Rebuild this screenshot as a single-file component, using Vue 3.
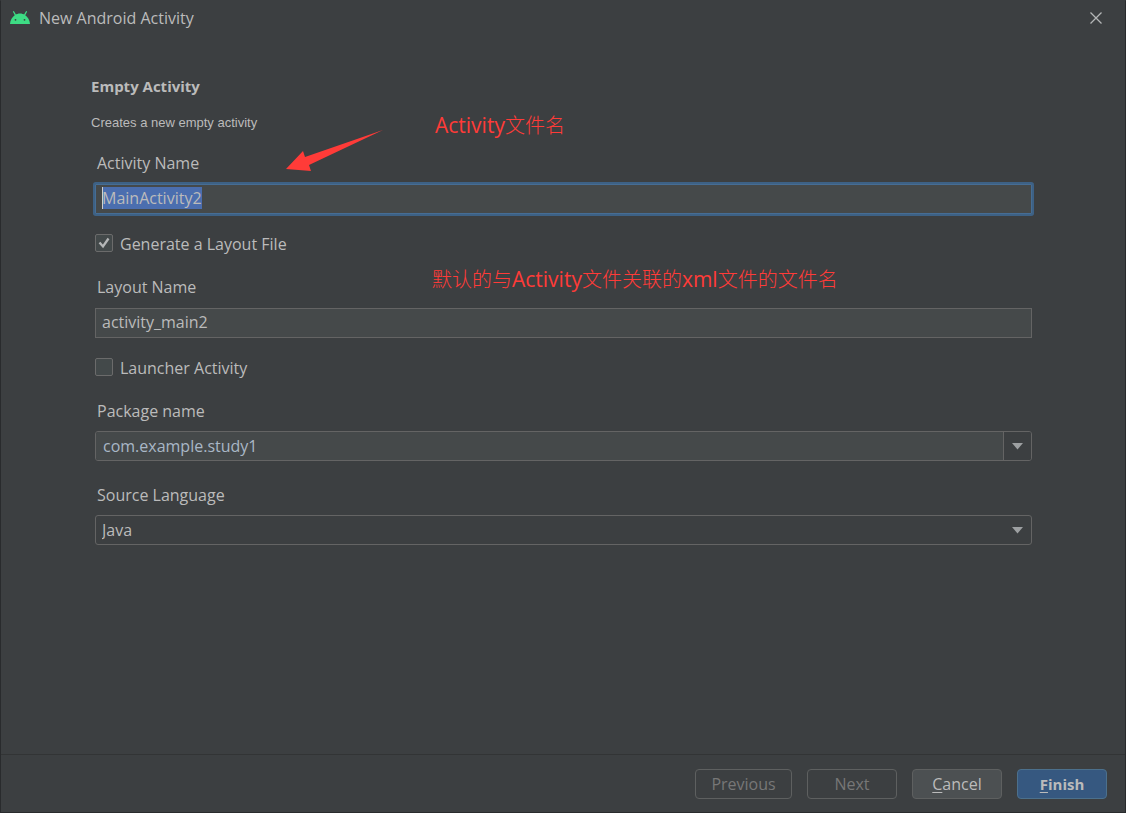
<script setup>
import { onMounted, ref } from 'vue'

const activityName = ref('MainActivity2')
const generateLayout = ref(true)
const layoutName = ref('activity_main2')
const launcher = ref(false)
const packageName = ref('com.example.study1')
const language = ref('Java')
const nameInput = ref(null)

onMounted(() => {
  nameInput.value.focus()
  nameInput.value.select()
})
</script>

<template>
  <div class="dialog">
    <header class="titlebar">
      <svg class="logo" width="20" height="14" viewBox="0 0 20 14" aria-hidden="true">
        <path d="M5.2 3.6 3.6.8M14.8 3.6 16.4.8" stroke="#3ddc84" stroke-width="1.3" stroke-linecap="round" />
        <path d="M0 13C.2 9.200 2.200 5.800 5 4 8 2 12 2 15 4 17.800 5.800 19.800 9.200 20 13Z" fill="#3ddc84" />
        <circle cx="5.500" cy="8.800" r="0.900" fill="#3c3f41" />
        <circle cx="14.500" cy="8.800" r="0.900" fill="#3c3f41" />
      </svg>
      <span class="caption">New Android Activity</span>
      <button class="close" type="button" aria-label="Close">
        <svg width="12" height="12" viewBox="0 0 12 12"><path d="M.5.5l11 11M11.500.5l-11 11" stroke="#b4b6b7" stroke-width="1.300" /></svg>
      </button>
    </header>

    <main class="content">
      <h1>Empty Activity</h1>
      <p class="description">Creates a new empty activity</p>

      <form class="form" @submit.prevent>
        <div class="field">
          <label for="activity">Activity Name</label>
          <div class="focus-box">
            <input id="activity" ref="nameInput" v-model="activityName" class="text focused" type="text" spellcheck="false" autocomplete="off" />
            <span class="caret"></span>
          </div>
          <svg class="arrow" width="98" height="43" viewBox="0 0 98 43" aria-hidden="true">
            <path d="M97 1 19 28 17 22 0 40 25 42 23 36Z" fill="#ff3b38" />
          </svg>
          <span class="note note-first"><span class="latin">Activity</span>文件名</span>
        </div>

        <label class="check">
          <input v-model="generateLayout" type="checkbox" />
          <svg v-if="generateLayout" class="tick" width="18" height="18" viewBox="0 0 18 18" aria-hidden="true">
            <path d="M4.500 8.500 8 12.500 13.500 4.500" fill="none" stroke="#b4b6b7" stroke-width="2.300" />
          </svg>
          <span>Generate a Layout File</span>
        </label>

        <div class="field">
          <label for="layout">Layout Name</label>
          <input id="layout" v-model="layoutName" class="text" type="text" spellcheck="false" autocomplete="off" />
          <span class="note note-second">默认的与<span class="latin">Activity</span>文件关联的<span class="latin">xml</span>文件的文件名</span>
        </div>

        <label class="check">
          <input v-model="launcher" type="checkbox" />
          <span>Launcher Activity</span>
        </label>

        <div class="field combo-field">
          <label for="package">Package name</label>
          <div class="combo">
            <input id="package" v-model="packageName" type="text" spellcheck="false" autocomplete="off" />
            <button type="button" aria-label="Show packages">
              <svg width="11" height="7" viewBox="0 0 11 7"><path d="M0 0H11L5.500 6.500Z" fill="#9da0a2" /></svg>
            </button>
          </div>
        </div>

        <div class="field combo-field last">
          <label for="language">Source Language</label>
          <div class="select-box">
            <select id="language" v-model="language">
              <option>Java</option>
              <option>Kotlin</option>
            </select>
            <svg width="11" height="7" viewBox="0 0 11 7" aria-hidden="true"><path d="M0 0H11L5.500 6.500Z" fill="#9da0a2" /></svg>
          </div>
        </div>
      </form>
    </main>

    <footer class="actions">
      <button class="btn wide" type="button" disabled>Previous</button>
      <button class="btn" type="button" disabled>Next</button>
      <button class="btn normal" type="button"><span><u>C</u>ancel</span></button>
      <button class="btn primary" type="button"><span><u>F</u>inish</span></button>
    </footer>
  </div>
</template>

<style>
body {
  margin: 0;
  background: #3c3f41;
}
</style>

<style scoped>
.dialog {
  box-sizing: border-box;
  min-height: 100vh;
  display: flex;
  flex-direction: column;
  border: 1px solid #292b2d;
  border-top-color: #3c3f41;
  background: #3c3f41;
  color: #bbbbbb;
  font: 16px/22px "Open Sans", "Noto Sans CJK SC", sans-serif;
}

input, select, button {
  box-sizing: border-box;
  margin: 0;
  color: inherit;
  font: inherit;
}

.titlebar {
  display: flex;
  align-items: center;
  height: 34px;
  padding: 0 23px 0 9px;
}

.logo { flex: none; }

.caption {
  flex: 1;
  margin-left: 9px;
}

.close {
  display: flex;
  padding: 0;
  border: 0;
  background: none;
}

.content {
  flex: 1;
  padding: 40px 90px 0;
}

h1 {
  margin: 0;
  font-size: 15px;
  line-height: 22px;
}

.description {
  margin: 18px 0 0;
  font: 13px/16px "Liberation Sans", sans-serif;
}

.form {
  display: flex;
  flex-direction: column;
  gap: 20px;
  padding: 21px 3px 0 4px;
}

.field {
  position: relative;
  display: flex;
  flex-direction: column;
  gap: 10px;
}

.field > label { padding-left: 2px; }

.combo-field { gap: 9px; }

.last { margin-top: 3px; }

.text {
  width: 100%;
  height: 30px;
  padding: 0 6px 2px;
  border: 1px solid #646464;
  background: #45494a;
  outline: none;
}

.focus-box {
  position: relative;
  height: 30px;
}

.focused {
  border-color: #466d94;
  border-radius: 1px;
  box-shadow: 0 0 0 2px #3d6185;
}

.focused::selection {
  background: #4b6eaf;
  color: #bbbbbb;
}

.caret {
  position: absolute;
  left: 7px;
  top: 3px;
  width: 1px;
  height: 22px;
  background: #d0d0d0;
}

.check {
  position: relative;
  display: flex;
  align-items: flex-start;
  gap: 7px;
  min-height: 22px;
  line-height: 20px;
}

.check input {
  appearance: none;
  width: 18px;
  height: 18px;
  border: 1px solid #6b6b6b;
  border-radius: 2px;
  background: #43494a;
}

.tick {
  position: absolute;
  left: 0;
  top: 0;
}

.combo {
  box-sizing: border-box;
  display: flex;
  height: 30px;
  overflow: hidden;
  border: 1px solid #646464;
  border-radius: 3px;
}

.combo input {
  flex: 1;
  min-width: 0;
  padding: 0 7px;
  border: 0;
  background: #45494a;
  color: #a9b7c6;
  outline: none;
}

.combo button {
  display: flex;
  align-items: center;
  justify-content: center;
  width: 28px;
  padding: 0;
  border: 0;
  border-left: 1px solid #646464;
  background: #3c3f41;
}

.select-box {
  position: relative;
  height: 30px;
}

select {
  appearance: none;
  width: 100%;
  height: 30px;
  padding: 0 30px 0 6px;
  border: 1px solid #646464;
  border-radius: 3px;
  background: #3c3f41;
}

.select-box svg {
  position: absolute;
  right: 9px;
  top: 12px;
  pointer-events: none;
}

.arrow {
  position: absolute;
  left: 191px;
  top: -23px;
}

.note {
  position: absolute;
  color: #ff3b38;
  font-size: 20px;
  font-weight: 300;
  line-height: 28px;
  white-space: nowrap;
}

.latin {
  font-size: 21px;
  font-weight: 400;
}

.note-first {
  left: 340px;
  top: -41px;
}

.note-second {
  left: 337px;
  top: -11px;
}

.actions {
  display: flex;
  flex-wrap: wrap;
  justify-content: flex-end;
  gap: 15px;
  padding: 14px 18px 13px;
  border-top: 1px solid #323435;
}

.btn {
  min-width: 90px;
  height: 30px;
  padding: 0 12px;
  border: 1px solid #5e6060;
  border-radius: 4px;
  background: #3c3f41;
  line-height: 22px;
}

.btn:disabled { color: #777777; }

.wide { min-width: 97px; }

.normal { background: #4c5052; }

.primary {
  border-color: #4c708c;
  background: #365880;
  font-size: 15px;
  font-weight: 700;
}

u { text-underline-offset: 2px; }
</style>
